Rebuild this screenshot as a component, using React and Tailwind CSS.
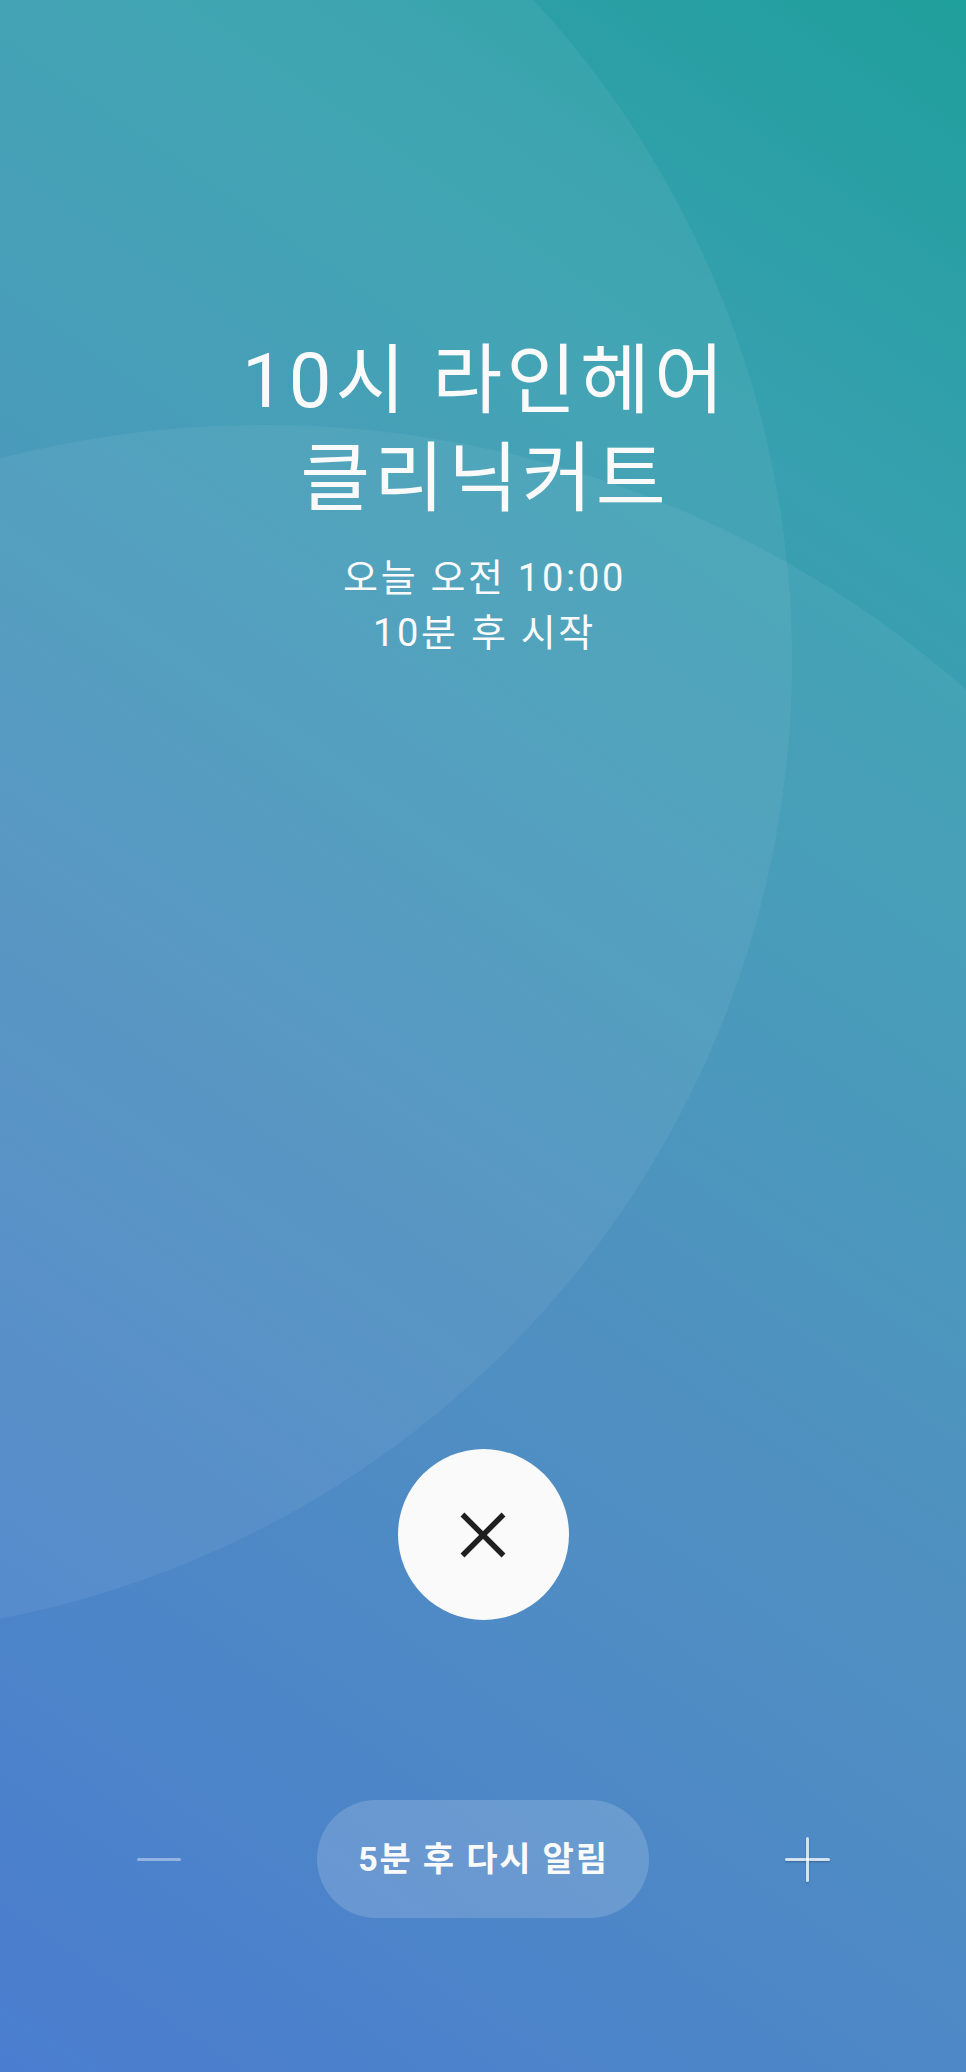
import React from 'react';

const font = { fontFamily: 'Roboto, "Noto Sans CJK KR", sans-serif' };

const CloseIcon = () => (
  <svg width="46" height="46" viewBox="0 0 46 46" fill="none">
    <path d="M2.5 2.5L43.5 43.5M43.5 2.5L2.5 43.5" stroke="#1f1f1f" strokeWidth="5.5" />
  </svg>
);

const App = () => {
  return (
    <div
      className="relative h-[2072px] w-full overflow-hidden bg-[linear-gradient(215deg,#1f9f9c_0%,#38a0b0_22%,#4589be_60%,#3f75cc_100%)] text-[#fafafa]"
      style={font}
    >
      {/* soft background circles */}
      <div className="absolute left-[-1158px] top-[-314px] h-[1950px] w-[1950px] rounded-full bg-white/[0.06]" />
      <div className="absolute left-[-800px] top-[425px] h-[2128px] w-[2128px] rounded-full bg-white/[0.06]" />

      <div className="relative flex h-full flex-col items-center">
        {/* Title */}
        <div className="pt-[332px] text-center">
          <h1 className="pl-[4px] text-[76px] font-normal leading-[98px] tracking-[4px]">
            10시 라인헤어
            <br />
            클리닉커트
          </h1>
          <p className="mt-[23px] pl-[3px] text-[38px] leading-[55px] tracking-[2.7px]">
            오늘 오전 10:00
            <br />
            10분 후 시작
          </p>
        </div>

        <div className="flex-1" />

        {/* Dismiss */}
        <button className="flex h-[171px] w-[171px] items-center justify-center rounded-full bg-[#fafafa]">
          <CloseIcon />
        </button>

        {/* Snooze */}
        <div className="mb-[154px] mt-[180px] flex items-center justify-center gap-[136px]">
          <div className="h-[3px] w-[44px] rounded-full bg-white/40" />
          <button className="flex h-[118px] w-[332px] items-center justify-center rounded-full bg-white/[0.16] pl-[2px] text-[34px] font-bold tracking-[1.8px] text-[#fafafa]">
            5분 후 다시 알림
          </button>
          <div className="relative h-[45px] w-[45px]">
            <div className="absolute left-0 top-[21px] h-[3px] w-[45px] rounded-full bg-white/75 shadow-[0_1px_2px_rgba(0,0,0,0.25)]" />
            <div className="absolute left-[21px] top-0 h-[45px] w-[3px] rounded-full bg-white/75 shadow-[0_1px_2px_rgba(0,0,0,0.25)]" />
          </div>
        </div>
      </div>
    </div>
  );
};

export default App;
